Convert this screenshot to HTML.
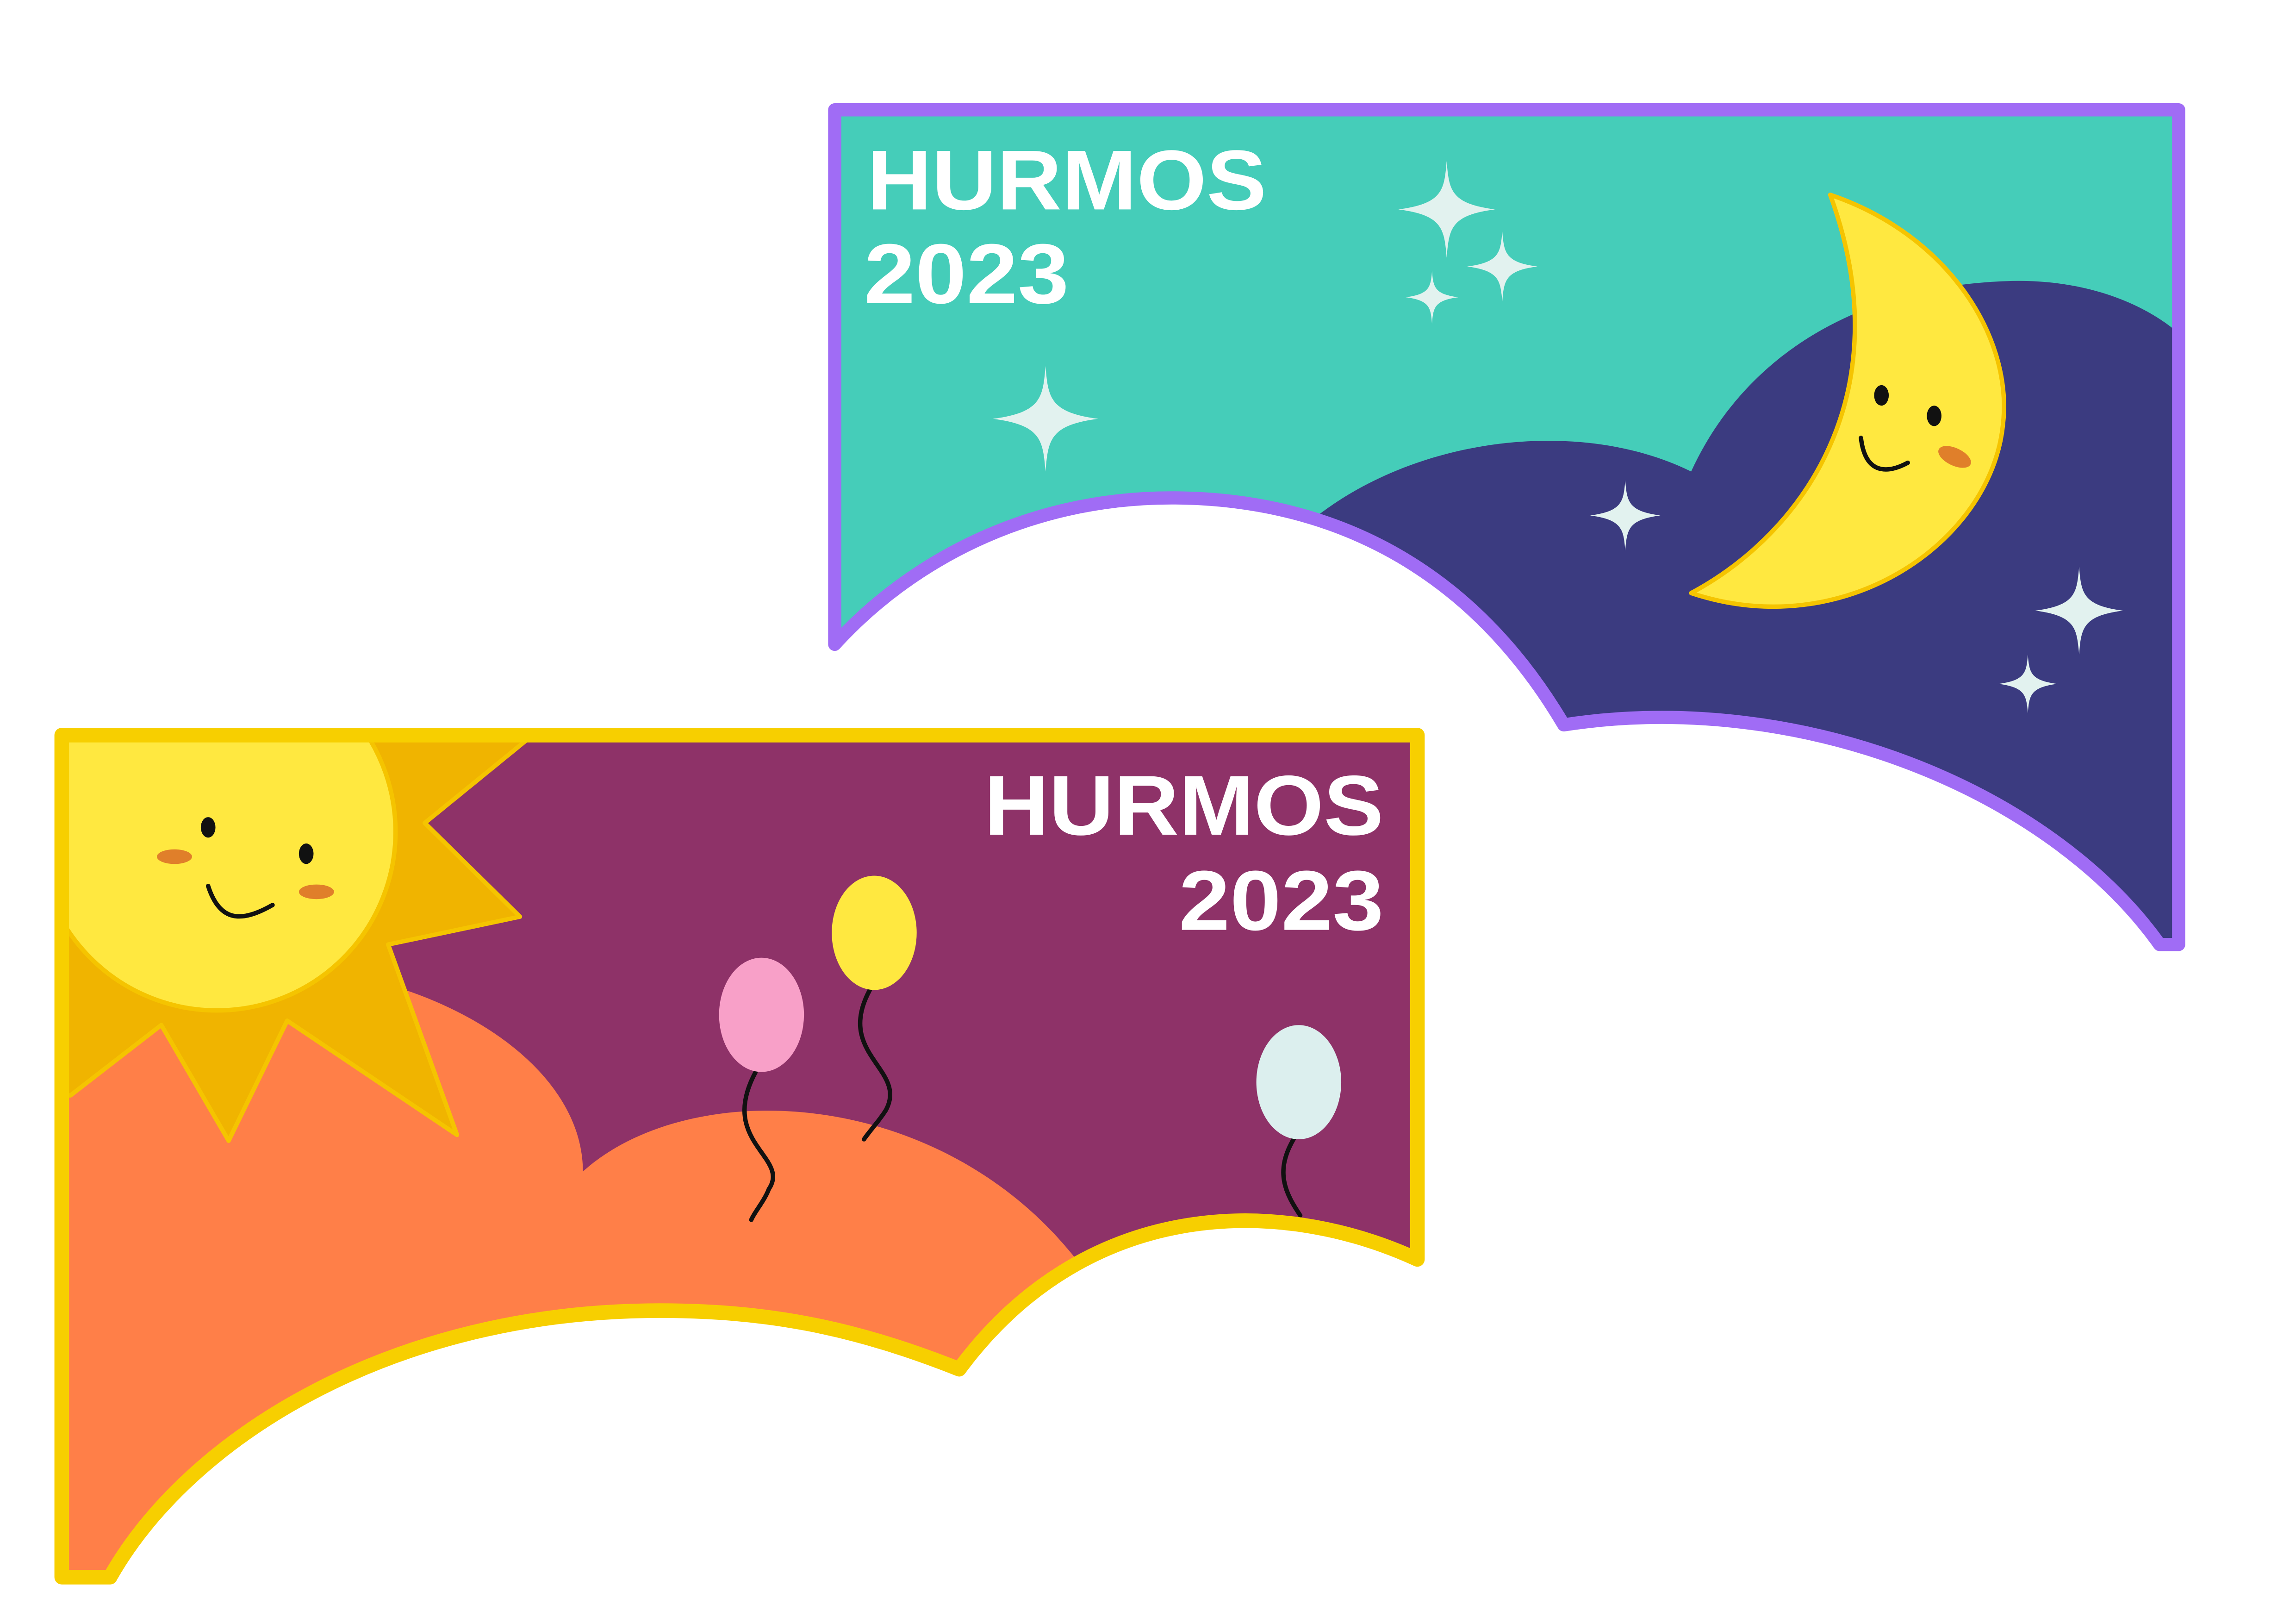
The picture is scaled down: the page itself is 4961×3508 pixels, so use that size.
<!DOCTYPE html>
<html><head><meta charset="utf-8"><style>
html,body{margin:0;padding:0;background:#fff;}
svg{display:block}
text{font-family:"Liberation Sans",sans-serif;font-weight:bold;fill:#fff}
</style></head><body>
<svg width="4961" height="3508" viewBox="0 0 1568 1109" xmlns="http://www.w3.org/2000/svg">
<defs>
<symbol id="st" viewBox="-10 -10 20 20"><path d="M0,-10 C0.5,-4 0.8,-1.2 10,0 C0.8,1.2 0.5,4 0,10 C-0.5,4 -0.8,1.2 -10,0 C-0.8,-1.2 -0.5,-4 0,-10Z" fill="#E2F2EF"/></symbol>
<clipPath id="c1"><path d="M570,75 H1488 V645 H1475 C1400,540 1230,470 1068,495 C1000,380 900,340 800,340 C700,340 620,385 570,440 Z"/></clipPath>
<clipPath id="c2"><path d="M42,502 H968 V860 C870,815 740,820 655,935 C580,905 520,895 450,895 C270,895 130,980 75,1077 H42 Z"/></clipPath>
</defs>
<g clip-path="url(#c1)">
<rect x="560" y="70" width="940" height="600" fill="#45CDB9"/>
<path d="M900,352 C970,298 1080,285 1155,322 C1195,235 1280,195 1370,192 C1420,190 1460,205 1485,225 V660 H900 Z" fill="#3B3B80"/>
</g>
<path d="M570,75 H1488 V645 H1475 C1400,540 1230,470 1068,495 C1000,380 900,340 800,340 C700,340 620,385 570,440 Z" fill="none" stroke="#A06CF5" stroke-width="9" stroke-linejoin="round"/>
<use href="#st" x="955" y="110" width="66" height="66"/>
<use href="#st" x="1002" y="158" width="48" height="48"/>
<use href="#st" x="960" y="185" width="36" height="36"/>
<use href="#st" x="678" y="250" width="72" height="72"/>
<use href="#st" x="1086" y="328" width="48" height="48"/>
<use href="#st" x="1390" y="387" width="60" height="60"/>
<use href="#st" x="1365" y="447" width="40" height="40"/>
<path d="M1250,133 C1330,160 1375,230 1368,290 C1360,370 1260,440 1155,405 C1230,365 1300,270 1250,133 Z" fill="#FFE840" stroke="#F5C400" stroke-width="3" stroke-linejoin="round"/>
<ellipse cx="1285" cy="270" rx="5" ry="7" fill="#111"/>
<ellipse cx="1321" cy="284" rx="5" ry="7" fill="#111"/>
<ellipse cx="1335" cy="312" rx="12" ry="6" transform="rotate(25 1335 312)" fill="#E07F2A"/>
<path d="M1271,299 C1274,325 1290,323 1303,316" fill="none" stroke="#111" stroke-width="3" stroke-linecap="round"/>
<text x="592" y="143" font-size="58" textLength="273" lengthAdjust="spacingAndGlyphs">HURMOS</text>
<text x="590" y="207" font-size="58" textLength="140" lengthAdjust="spacingAndGlyphs">2023</text>
<g clip-path="url(#c2)">
<rect x="40" y="500" width="935" height="600" fill="#8E3268"/>
<path d="M200,660 C310,670 398,730 398,800 C470,735 640,740 735,860 L760,1100 H40 V660 Z" fill="#FF7F48"/>
<polygon points="255,505 360,505 290,562 355,626 265,645 312,775 196,697 156,779 110,700 48,748 40,748 40,505" fill="#F0B400" stroke="#F5C400" stroke-width="3" stroke-linejoin="round"/>
<circle cx="148" cy="568" r="122" fill="#FFE840" stroke="#F5C400" stroke-width="3"/>
</g>
<ellipse cx="142" cy="565" rx="5" ry="7" fill="#111"/>
<ellipse cx="209" cy="583" rx="5" ry="7" fill="#111"/>
<ellipse cx="119" cy="585" rx="12" ry="5" fill="#E07F2A"/>
<ellipse cx="216" cy="609" rx="12" ry="5" fill="#E07F2A"/>
<path d="M142,605 C150,630 165,630 186,618" fill="none" stroke="#111" stroke-width="3" stroke-linecap="round"/>
<path d="M516,732 C490,780 540,790 525,812 C522,820 515,828 513,833" fill="none" stroke="#111" stroke-width="3" stroke-linecap="round"/>
<path d="M594,676 C570,720 620,730 605,758 C600,766 594,772 590,778" fill="none" stroke="#111" stroke-width="3" stroke-linecap="round"/>
<path d="M884,777 C870,800 878,815 888,830" fill="none" stroke="#111" stroke-width="3" stroke-linecap="round"/>
<ellipse cx="520" cy="693" rx="29" ry="39" fill="#F8A0C8"/>
<ellipse cx="597" cy="637" rx="29" ry="39" fill="#FFE840"/>
<ellipse cx="887" cy="739" rx="29" ry="39" fill="#DCEFEE"/>
<path d="M42,502 H968 V860 C870,815 740,820 655,935 C580,905 520,895 450,895 C270,895 130,980 75,1077 H42 Z" fill="none" stroke="#F7CF00" stroke-width="10" stroke-linejoin="round"/>
<text x="945" y="570" font-size="58" text-anchor="end" textLength="273" lengthAdjust="spacingAndGlyphs">HURMOS</text>
<text x="945" y="635" font-size="58" text-anchor="end" textLength="140" lengthAdjust="spacingAndGlyphs">2023</text>
</svg>
</body></html>
